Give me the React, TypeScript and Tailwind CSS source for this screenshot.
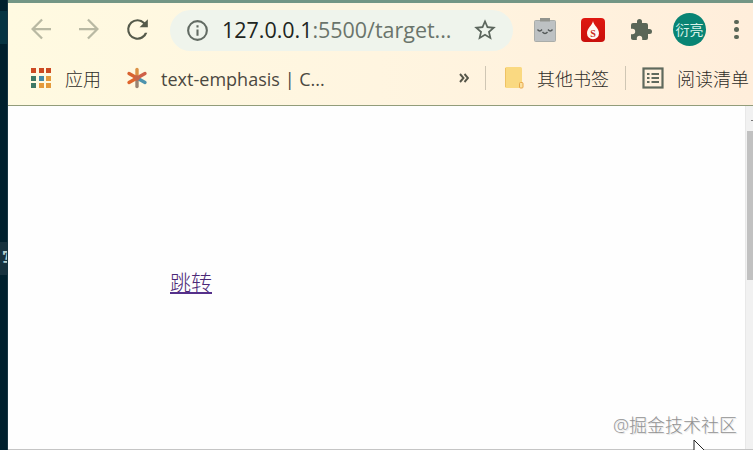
import type { ReactNode } from "react";

type GlyphProps = { d: string; className: string };

function Glyph({ d, className }: GlyphProps) {
  return (
    <svg viewBox="0 0 24 24" fill="currentColor" className={`shrink-0 ${className}`}>
      <path d={d} />
    </svg>
  );
}

function Label({ className, children }: { className: string; children: ReactNode }) {
  return <span className={`shrink-0 whitespace-nowrap ${className}`}>{children}</span>;
}

const BACK = "M20 11.1H7.4l6.1-6.1L12.2 3.8 4 12l8.2 8.2 1.3-1.2-6.1-6.1H20z";
const FORWARD = "M4 11.1h12.6L10.5 5l1.3-1.2L20 12l-8.2 8.2-1.3-1.2 6.1-6.1H4z";
const RELOAD =
  "M17.65 6.35A7.96 7.96 0 0 0 12 4a8 8 0 1 0 7.600 10.500h-1.900A6.300 6.300 0 1 1 12 5.700c1.700 0 3.240.700 4.380 1.850L13.600 10.300h6.400V4z";
const INFO =
  "M11 7h2v2h-2zm0 4h2v6h-2zm1-9a10 10 0 1 0 0 20 10 10 0 0 0 0-20zm0 18a8 8 0 1 1 0-16 8 8 0 0 1 0 16z";
const STAR =
  "M22 9.24l-7.19-.62L12 2 9.19 8.63 2 9.24l5.46 4.73L5.82 21 12 17.27 18.18 21l-1.63-7.03zM12 15.4l-3.76 2.27 1-4.28-3.32-2.88 4.38-.38L12 6.1l1.71 4.04 4.38.38-3.32 2.88 1 4.28z";
const PUZZLE =
  "M20.5 11H19V7a2 2 0 0 0-2-2h-4V3.5a2.5 2.5 0 0 0-5 0V5H4a2 2 0 0 0-2 2v3.8h1.5a2.7 2.7 0 0 1 0 5.4H2V20c0 1.1.9 2 2 2h3.8v-1.5a2.7 2.7 0 0 1 5.4 0V22H17a2 2 0 0 0 2-2v-4h1.5a2.5 2.5 0 0 0 0-5z";

function ClipboardFace() {
  return (
    <svg viewBox="0 0 24 26" className="mb-[2px] ml-[20px] h-[26px] w-6 shrink-0">
      <rect x="1.500" y="4.500" width="21" height="21" rx="1" fill="#bdc1c3" stroke="#aaada9" />
      <path d="M7 2h10v3.500H7z" fill="#92948e" />
      <path d="M4.5 13.500q2.200 3 4.500 0M15 13.500q2.300 3 4.500 0M9.500 16q2.500 3 5 0" fill="none" stroke="#555a5a" strokeWidth="1.400" />
    </svg>
  );
}

function DropBadge() {
  return (
    <span className="ml-[24px] flex h-6 w-6 shrink-0 items-center justify-center rounded bg-linear-to-b from-[#df1710] to-[#c9100c]">
      <svg viewBox="0 0 24 24" className="h-6 w-6">
        <path d="M12 3c-.6 4-6 7.500-6 12.200a6 6 0 0 0 12 0C18 10.500 12.600 7 12 3z" fill="#fff8f2" />
        <text x="12" y="18.500" textAnchor="middle" fontSize="10" fontWeight="bold" fill="#cc2a20" fontFamily="Liberation Serif, serif">S</text>
      </svg>
    </span>
  );
}

function Toolbar() {
  return (
    <div className="flex h-[54px] items-center">
      <Glyph d={BACK} className="mb-[2px] ml-[18px] h-[30px] w-[30px] text-[#b9b9a3]" />
      <Glyph d={FORWARD} className="mb-[2px] ml-[18px] h-[30px] w-[30px] text-[#b9b9a3]" />
      <Glyph d={RELOAD} className="mb-px ml-[18px] h-[31px] w-[31px] text-[#555a4b]" />
      <div className="ml-[17px] flex h-[41px] w-[343px] shrink-0 items-center rounded-full bg-[#eff4ec]">
        <Glyph d={INFO} className="ml-[15px] h-[25px] w-[25px] text-[#626b63]" />
        <Label className="ml-[12px] w-[240px] text-[21.500px] leading-7 tracking-[-0.030px] text-[#6a746b]">
          <span className="text-[#202421]">127.0.0.1</span>:5500/target...
        </Label>
        <Glyph d={STAR} className="ml-[10px] h-[26px] w-[26px] text-[#5c665d]" />
      </div>
      <ClipboardFace />
      <DropBadge />
      <Glyph d={PUZZLE} className="ml-[24px] h-6 w-6 text-[#5a6657]" />
      <span className="mb-[2px] ml-[20px] flex h-[33px] w-[33px] shrink-0 items-center justify-center rounded-full bg-[#098474] text-[14px] text-[#d8f2e9]">
        衍亮
      </span>
      <span className="mb-px ml-[28px] flex shrink-0 flex-col gap-[3px]">
        <i className="h-[4.500px] w-[4.500px] rounded-full bg-[#5a6657]" />
        <i className="h-[4.500px] w-[4.500px] rounded-full bg-[#5a6657]" />
        <i className="h-[4.500px] w-[4.500px] rounded-full bg-[#5a6657]" />
      </span>
    </div>
  );
}

const APP_COLORS = [
  "bg-[#cc4a22]", "bg-[#cc4a22]", "bg-[#cc4a22]",
  "bg-[#3d7865]", "bg-[#438aa8]", "bg-[#e49a3c]",
  "bg-[#3d7865]", "bg-[#e49a3c]", "bg-[#e49a3c]",
];

function Bookmarks() {
  return (
    <div className="flex h-12 items-center pb-[6px] text-[18px] text-[#4b4840]">
      <div className="ml-[23px] grid shrink-0 grid-cols-3 gap-[2.500px]">
        {APP_COLORS.map((color, i) => (
          <i key={i} className={`h-[5px] w-[5px] ${color}`} />
        ))}
      </div>
      <Label className="mt-[2px] ml-[14px] w-9 font-light text-[#2e2c28]">应用</Label>
      <svg viewBox="0 0 22 22" className="ml-[25px] h-[22px] w-[22px] shrink-0" strokeWidth="3.400" strokeLinecap="round">
        <path d="M11 11V19.500" stroke="#9a8472" />
        <path d="M11 11L3 15.500" stroke="#e0662c" />
        <path d="M11 11L19 15.500" stroke="#4d93ad" />
        <path d="M11 11L19 6.500" stroke="#cf6047" />
        <path d="M11 11V2.500" stroke="#dc9245" />
        <path d="M11 11L3 6.500" stroke="#d9632f" />
        <circle cx="11" cy="11" r="1" fill="#b66b55" stroke="#c7664b" />
      </svg>
      <Label className="mt-[2px] ml-[13px] w-[180px] tracking-[0.020px]">text-emphasis | C...</Label>
      <svg viewBox="0 0 10 10" className="ml-[118px] h-[10px] w-[10px] shrink-0" fill="none" stroke="#555548" strokeWidth="1.900">
        <path d="M1 1l3.500 4L1 9M5.500 1L9 5 5.500 9" />
      </svg>
      <i className="ml-[16px] h-6 w-px shrink-0 bg-[#cfc6b4]" />
      <svg viewBox="0 0 20 22" className="ml-[18px] h-[22px] w-5 shrink-0">
        <rect x="1" y="0" width="17" height="21" rx="1.500" fill="#fad981" />
        <path d="M1.500 1v19" stroke="#efc263" />
        <rect x="15.500" y="15.500" width="3.500" height="5.500" rx="1" fill="#fce1a0" stroke="#e9a84a" />
      </svg>
      <Label className="mt-[2px] ml-[13px] w-[72px] font-light text-[#2e2c28]">其他书签</Label>
      <i className="ml-[16px] h-6 w-px shrink-0 bg-[#cfc6b4]" />
      <svg viewBox="0 0 22 22" className="ml-[16px] h-[22px] w-[22px] shrink-0" fill="none" stroke="#5f695d" strokeWidth="2.200">
        <rect x="1.500" y="1.500" width="19" height="19" />
        <path d="M5 7h2.500M5 11h2.500M5 15h2.500M9.500 7H17M9.500 11H17M9.500 15H17" />
      </svg>
      <Label className="mt-[2px] ml-[13px] font-light text-[#2e2c28]">阅读清单</Label>
    </div>
  );
}

export default function App() {
  return (
    <div className="flex h-[450px] w-[753px] overflow-hidden bg-[#fefefe] font-['Open_Sans','Noto_Sans_CJK_SC',sans-serif]">
      <aside className="flex w-2 shrink-0 flex-col overflow-hidden border-r border-[#173542] bg-[#00202d] pt-[11px]">
        <div className="h-[33px] shrink-0 bg-[#063442]" />
        <div className="mt-[198px] h-[33px] shrink-0 overflow-hidden bg-[#17323e] pt-[3px] pl-[2px] font-['Noto_Sans_CJK_SC',sans-serif] text-[16px] leading-6 font-bold text-[#b7d0cd]">
          写
        </div>
      </aside>
      <main className="flex min-w-0 flex-1 flex-col overflow-hidden">
        <header className="h-[106px] shrink-0 overflow-hidden border-t-[3px] border-b border-t-[#739685] border-b-[#929c7a] bg-linear-to-r from-[#fffae1] via-[#fff5e0] to-[#ffeedb]">
          <Toolbar />
          <Bookmarks />
        </header>
        <div className="flex min-h-0 flex-1 border-b border-[#c5c5c5]">
          <section className="relative min-w-0 flex-1 pt-[161px] pl-[162px]">
            <a href="#target" className="block h-[27px] w-[42px] border-b-2 border-[#55308b] text-[21px] leading-[31px] font-light text-[#4b2877]">
              跳转
            </a>
            <div className="absolute right-[8px] bottom-[10px] text-[18px] leading-[28px] font-light whitespace-nowrap text-[#929292] [text-shadow:1px_1px_1px_#ddd]">
              @掘金技术社区
            </div>
            <svg viewBox="0 0 14 20" className="absolute -bottom-[10px] left-[685px] h-5 w-[14px]">
              <path d="M1 1v17l4-4 3 6 3-1-3-6h5z" fill="#fff" stroke="#222" />
            </svg>
          </section>
          <div className="flex w-2 shrink-0 flex-col border-l border-[#e8e8e8] bg-[#f1f1f1] pl-px">
            <div className="flex h-[25px] shrink-0 items-center justify-end">
              <i className="mt-1 h-px w-[2px] bg-[#777]" />
            </div>
            <div className="h-[149px] bg-[#c1c1c1]" />
          </div>
        </div>
      </main>
    </div>
  );
}
